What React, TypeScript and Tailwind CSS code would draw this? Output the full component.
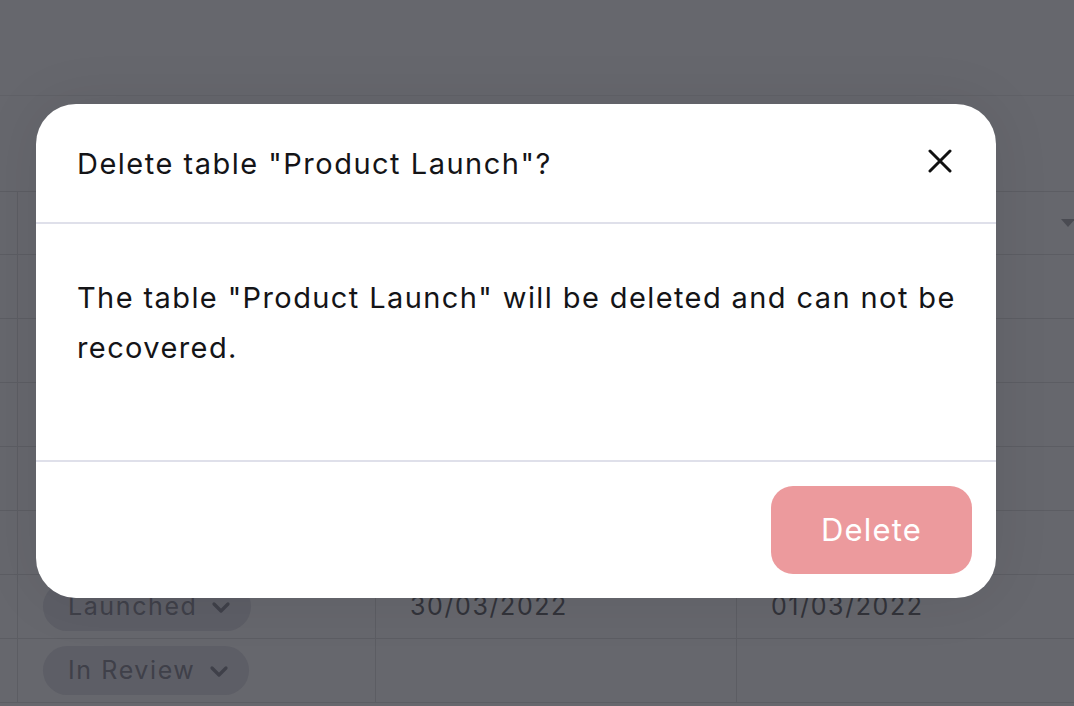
import React from "react";

function Chevron() {
  return (
    <svg width="24" height="24" viewBox="0 0 24 24" fill="none" stroke="currentColor" strokeWidth="3.2" strokeLinecap="round" strokeLinejoin="round">
      <path d="M5 9l7 7 7-7" />
    </svg>
  );
}

function Row({ children }: { children?: React.ReactNode }) {
  return (
    <div className="grid grid-cols-[18px_358px_361px_1fr] h-[64px] border-b border-[#5c5d63]">
      {children ?? (
        <>
          <div className="border-r border-[#5c5d63]" />
          <div className="border-r border-[#5c5d63]" />
          <div className="border-r border-[#5c5d63]" />
          <div />
        </>
      )}
    </div>
  );
}

export default function App() {
  return (
    <div className="relative w-[1074px] h-[706px] overflow-hidden bg-[#66676d]" style={{ fontFamily: "Inter, 'Noto Sans', sans-serif" }}>
      {/* background page */}
      <div className="flex flex-col">
        <div className="h-[96px] border-b border-[#606167]" />
        <div className="h-[95px]" />
        <div className="grid grid-cols-[18px_358px_361px_1fr] h-[64px] border-y border-[#5c5d63]">
          <div className="border-r border-[#5c5d63]" />
          <div className="border-r border-[#5c5d63]" />
          <div className="border-r border-[#5c5d63]" />
          <div className="flex items-center justify-end">
            <div className="w-0 h-0 border-l-[7px] border-r-[7px] border-t-[8px] border-l-transparent border-r-transparent border-t-[#4a4b52] -mr-[1px]" />
          </div>
        </div>
        <Row />
        <Row />
        <Row />
        <Row />
        <Row />
        <Row>
          <div className="border-r border-[#5c5d63]" />
          <div className="border-r border-[#5c5d63] flex items-center pl-[25px]">
            <div className="flex items-center gap-[12px] h-[49px] pl-[25px] pr-[18px] rounded-full bg-[#5d5e66] text-[#3f4049] text-[25px] tracking-[1.6px]">
              Launched <Chevron />
            </div>
          </div>
          <div className="border-r border-[#5c5d63] flex items-center pl-[34px] text-[25px] tracking-[1.6px] text-[#32333a]">30/03/2022</div>
          <div className="flex items-center pl-[34px] text-[25px] tracking-[1.6px] text-[#32333a]">01/03/2022</div>
        </Row>
        <Row>
          <div className="border-r border-[#5c5d63]" />
          <div className="border-r border-[#5c5d63] flex items-center pl-[25px]">
            <div className="flex items-center gap-[12px] h-[49px] pl-[25px] pr-[18px] rounded-full bg-[#5d5e66] text-[#3f4049] text-[25px] tracking-[1.6px]">
              In Review <Chevron />
            </div>
          </div>
          <div className="border-r border-[#5c5d63]" />
          <div />
        </Row>
      </div>

      {/* modal */}
      <div className="absolute left-[36px] top-[104px] w-[960px] h-[494px] bg-white rounded-[40px] flex flex-col shadow-[0_0_60px_rgba(0,0,0,0.08)]">
        <div className="h-[120px] flex items-center justify-between pl-[41px] pr-[44px] border-b-2 border-[#dfe0ea]">
          <h2 className="text-[29px] font-normal tracking-[1.5px] text-[#141417] leading-none pt-[1px]">Delete table "Product Launch"?</h2>
          <svg width="24" height="24" viewBox="0 0 24 24" fill="none" stroke="#111" strokeWidth="3" strokeLinecap="round" className="-mt-[4px]">
            <path d="M2 2l20 20M22 2L2 22" />
          </svg>
        </div>
        <div className="h-[238px] pl-[41px] pr-[36px] pt-[49px] text-[29px] tracking-[1.4px] leading-[50px] text-[#141417] border-b-2 border-[#dfe0ea]">
          The table "Product Launch" will be deleted and can not be recovered.
        </div>
        <div className="flex-1 flex items-start justify-end pr-[24px] pt-[24px]">
          <button className="w-[201px] h-[88px] rounded-[22px] bg-[#ec9a9d] text-white text-[31px] tracking-[1.2px]">Delete</button>
        </div>
      </div>
    </div>
  );
}
